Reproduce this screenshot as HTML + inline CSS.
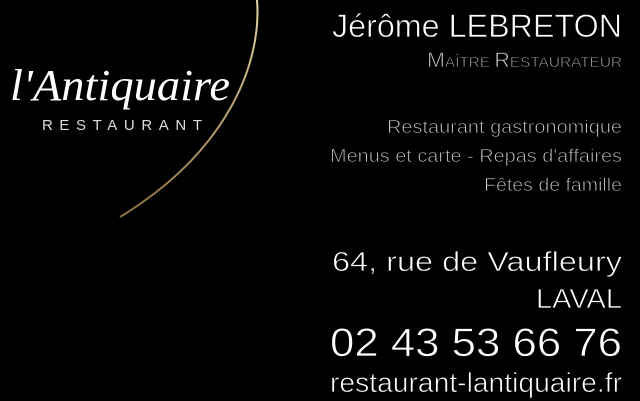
<html><head><style>body{margin:0;background:#000;width:640px;height:401px;overflow:hidden}</style></head><body>
<svg width="640" height="401" viewBox="0 0 640 401" xmlns="http://www.w3.org/2000/svg" font-family="Liberation Sans, sans-serif">
<defs><linearGradient id="g" x1="0" y1="0" x2="0" y2="1"><stop offset="0" stop-color="#e8d6a8"/><stop offset="1" stop-color="#8a7040"/></linearGradient></defs>
<rect width="640" height="401" fill="#000"/>
<path d="M257 0 C262 60 230 150 120 217" fill="none" stroke="url(#g)" stroke-width="2"/>
<text x="10" y="100" font-family="Liberation Serif, serif" font-style="italic" font-size="44" fill="#fff" textLength="220" lengthAdjust="spacingAndGlyphs">l'Antiquaire</text>
<text x="42" y="130" font-size="15" fill="#ddd" textLength="160" lengthAdjust="spacing">RESTAURANT</text>
<g fill="#fff" text-anchor="end" stroke="#000" stroke-width="0.7">
<text x="622" y="37" font-size="32" textLength="290" lengthAdjust="spacingAndGlyphs">Jérôme LEBRETON</text>
<text x="622" y="67" font-size="15" fill="#ccc" textLength="195" lengthAdjust="spacingAndGlyphs"><tspan font-size="21">M</tspan>AÎTRE <tspan font-size="21">R</tspan>ESTAURATEUR</text>
<text x="622" y="133" font-size="18" fill="#ccc" textLength="235" lengthAdjust="spacingAndGlyphs">Restaurant gastronomique</text>
<text x="622" y="162" font-size="18" fill="#ccc" textLength="292" lengthAdjust="spacingAndGlyphs">Menus et carte - Repas d'affaires</text>
<text x="622" y="191" font-size="18" fill="#ccc" textLength="138" lengthAdjust="spacingAndGlyphs">Fêtes de famille</text>
<text x="622" y="271" font-size="28" textLength="290" lengthAdjust="spacingAndGlyphs">64, rue de Vaufleury</text>
<text x="622" y="308" font-size="28" textLength="86" lengthAdjust="spacingAndGlyphs">LAVAL</text>
<text x="622" y="356" font-size="40" textLength="292" lengthAdjust="spacingAndGlyphs">02 43 53 66 76</text>
<text x="622" y="392" font-size="28" textLength="292" lengthAdjust="spacingAndGlyphs">restaurant-lantiquaire.fr</text>
</g>
</svg>
</body></html>
